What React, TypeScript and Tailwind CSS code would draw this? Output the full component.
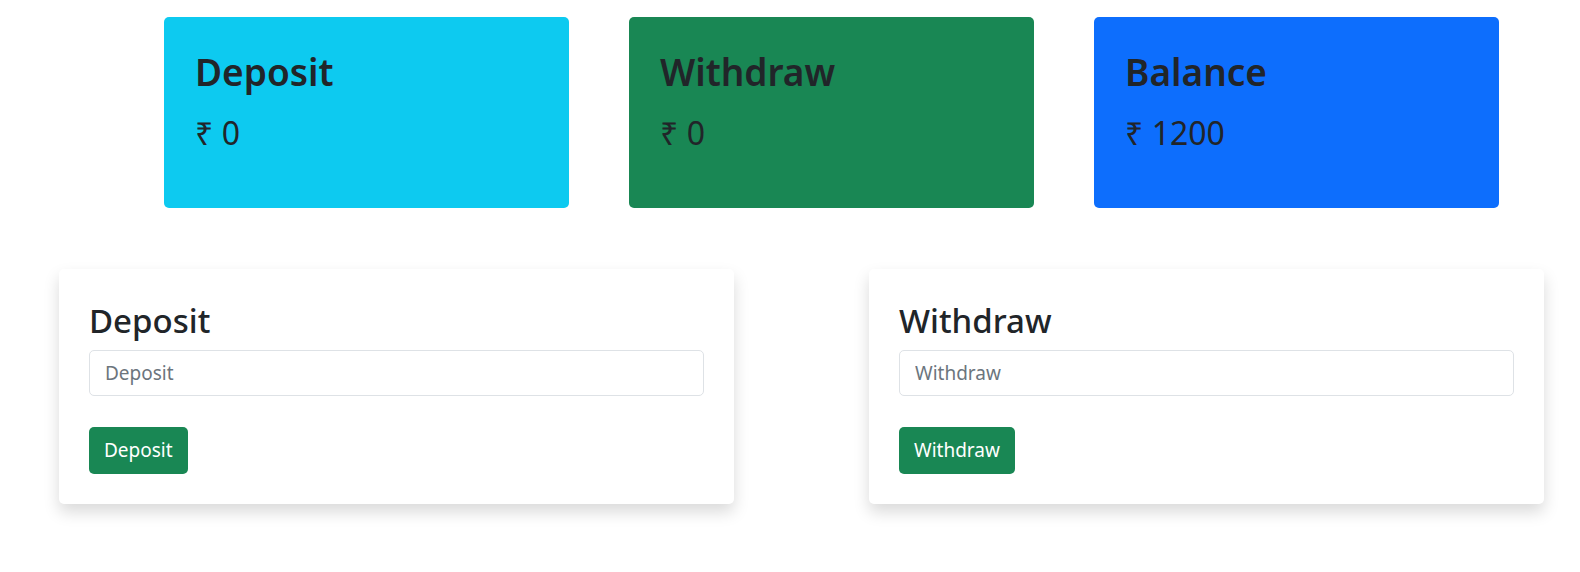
const stats = [
  { title: "Deposit", amount: 0, bg: "bg-[#0dcaf0]" },
  { title: "Withdraw", amount: 0, bg: "bg-[#198754]" },
  { title: "Balance", amount: 1200, bg: "bg-[#0d6efd]" },
];

const forms = [
  { title: "Deposit", button: "Deposit" },
  { title: "Withdraw", button: "Withdraw" },
];

const App = () => {
  return (
    <div
      className="min-h-[572px] bg-white text-[#212529]"
      style={{ fontFamily: '"Noto Sans", "Open Sans", sans-serif' }}
    >
      <div className="flex gap-[60px] pl-[164px] pt-[17px]">
        {stats.map((stat) => (
          <div
            key={stat.title}
            className={`${stat.bg} h-[191px] w-[405px] rounded-[5px] px-[31px] pt-[32px]`}
          >
            <h1 className="text-[37px] font-semibold leading-[46px]">
              {stat.title}
            </h1>
            <p className="mt-[19px] text-[32px] leading-[38px]">
              ₹ {stat.amount}
            </p>
          </div>
        ))}
      </div>

      <div className="flex gap-[135px] pl-[59px] pt-[61px]">
        {forms.map((form) => (
          <div
            key={form.title}
            className="w-[675px] rounded-[5px] bg-white px-[30px] pt-[32px] pb-[30px] shadow-[0_0.5rem_1rem_rgba(0,0,0,0.15)]"
          >
            <h2 className="text-[33px] font-medium leading-[40px]">
              {form.title}
            </h2>
            <input
              type="text"
              placeholder={form.title}
              className="mt-[9px] block h-[46px] w-full rounded-[5px] border border-[#dee2e6] px-[15px] text-[19px] placeholder:text-[#6c757d] focus:outline-none"
            />
            <button className="mt-[31px] h-[47px] rounded-[5px] bg-[#198754] px-[15px] text-[19px] text-white">
              {form.button}
            </button>
          </div>
        ))}
      </div>
    </div>
  );
};

export default App;
